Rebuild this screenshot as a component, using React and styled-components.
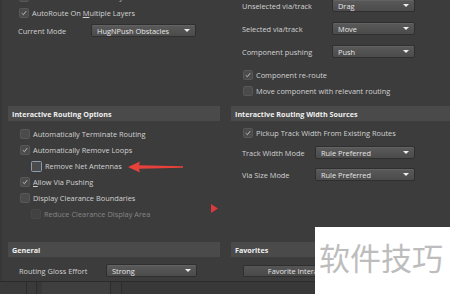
import React from "react";
import styled, { createGlobalStyle } from "styled-components";

const Global = createGlobalStyle`
  html, body { margin: 0; padding: 0; background: #3b3b3b; }
`;

export default function App() {
  return (
    <Page>
      <Global />
      <Body>
        <Cell $pad="0 0 0 18px" $top="1px">
          <Check label="AutoRoute On Current Layer" checked={false} />
          <Check label={<>AutoRoute On <u>M</u>ultiple Layers</>} checked />
          <Field $mt="3px" $labelW="73px" label="Current Mode" value="HugNPush Obstacles" selectW="105px" />
        </Cell>
        <Cell $pad="0 0 0 14px" $top="11px">
          <Field $labelW="90px" label="Unselected via/track" value="Drag" selectW="83px" />
          <Field $mt="10px" $labelW="90px" label="Selected via/track" value="Move" selectW="83px" />
          <Field $mt="10px" $labelW="90px" label="Component pushing" value="Push" selectW="83px" />
          <Spacer $h="9px" />
          <Check label="Component re-route" checked />
          <Check label="Move component with relevant routing" />
        </Cell>

        <Cell $pad="0 0 0 8px">
          <Header $w="212px">Interactive Routing Options</Header>
          <Rows $pad="5px 0 0 11px">
            <Check label="Automatically Terminate Routing" />
            <Check label="Automatically Remove Loops" checked />
            <Check label="Remove Net Antennas" indent focused />
            <Check label={<><u>A</u>llow Via Pushing</>} checked />
            <Check label="Display Clearance Boundaries" />
            <Check label="Reduce Clearance Display Area" indent disabled />
          </Rows>
        </Cell>
        <Cell $pad="0 0 0 3px">
          <Header>Interactive Routing Width Sources</Header>
          <Rows $pad="4px 0 0 11px">
            <Check label="Pickup Track Width From Existing Routes" checked />
            <Field $mt="5px" $labelW="73px" label="Track Width Mode" value="Rule Preferred" selectW="100px" />
            <Field $mt="9px" $labelW="73px" label="Via Size Mode" value="Rule Preferred" selectW="100px" />
          </Rows>
        </Cell>

        <Cell $pad="0 0 0 8px">
          <Header $w="212px">General</Header>
          <Rows $pad="7px 0 0 11px">
            <Field $labelW="87px" label="Routing Gloss Effort" value="Strong" selectW="91px" />
          </Rows>
        </Cell>
        <Cell $pad="0 0 0 3px">
          <Header>Favorites</Header>
          <Rows $pad="8px 0 0 12px">
            <Button>Favorite Interactive Routing Widths</Button>
          </Rows>
        </Cell>
      </Body>

      <Footer>
        <Tab $w="26px" />
        <Tab $w="9px" />
        <Gap $w="5px" />
        <Tab $w="68px" $light />
        <Tab $w="10px" />
      </Footer>

      <Arrow viewBox="0 0 58 12" width="58" height="12">
        <path d="M1 6 L13 0.5 L12 4.2 L56 5.3 L56 6.7 L12 7.8 L13 11.5 Z" fill="#e8413b" />
      </Arrow>
      <Pointer viewBox="0 0 7 9" width="7" height="9">
        <path d="M0 0 L7 4.5 L0 9 Z" fill="#d93a3c" />
      </Pointer>

      <Watermark>软件技巧</Watermark>
    </Page>
  );
}

function Check({ label, checked, indent, focused, disabled }) {
  return (
    <CheckRow $indent={indent} $disabled={disabled}>
      <Box $focused={focused} $disabled={disabled}>
        {checked && (
          <svg viewBox="0 0 10 10" width="10" height="10">
            <path d="M2.2 5.2 L4.2 7.2 L7.8 2.6" fill="none" stroke="#d6d6d6" strokeWidth="1" />
          </svg>
        )}
      </Box>
      <span>{label}</span>
    </CheckRow>
  );
}

function Field({ label, value, selectW, $labelW, $mt }) {
  return (
    <FieldRow $mt={$mt}>
      <Label $w={$labelW}>{label}</Label>
      <Select $w={selectW}>
        <span>{value}</span>
        <Caret />
      </Select>
    </FieldRow>
  );
}

const Page = styled.div`
  position: relative;
  width: 450px;
  height: 294px;
  overflow: hidden;
  background: #3c3c3c;
  box-shadow: inset 2px 0 0 #373737;
  font-family: "Open Sans", "Noto Sans", sans-serif;
  font-size: 7.4px;
  color: #d2d2d2;
`;

const Body = styled.div`
  display: grid;
  grid-template-columns: 228px 222px;
  grid-template-rows: 118px 136px 39px;
  margin-top: -12px;
`;

const Cell = styled.div`
  padding: ${(p) => p.$pad};
  padding-top: ${(p) => p.$top || "0"};
  display: flex;
  flex-direction: column;
  min-width: 0;
`;

const Rows = styled.div`
  display: flex;
  flex-direction: column;
  padding: ${(p) => p.$pad};
`;

const Spacer = styled.div`
  height: ${(p) => p.$h};
`;

const Header = styled.div`
  height: 15px;
  width: ${(p) => p.$w || "auto"};
  background: #4a4a4a;
  color: #f0f0f0;
  font-weight: 700;
  font-size: 7.2px;
  display: flex;
  align-items: center;
  padding-left: 4px;
  box-sizing: border-box;
  white-space: nowrap;
`;

const CheckRow = styled.label`
  height: 16px;
  display: flex;
  align-items: center;
  gap: 3px;
  padding-left: ${(p) => (p.$indent ? "12px" : "1px")};
  color: ${(p) => (p.$disabled ? "#858585" : "#d2d2d2")};
  white-space: nowrap;

  u {
    text-underline-offset: 1px;
  }
`;

const Box = styled.span`
  width: ${(p) => (p.$focused ? "11px" : "10px")};
  height: ${(p) => (p.$focused ? "11px" : "10px")};
  box-sizing: border-box;
  border-radius: 1.5px;
  background: ${(p) => (p.$disabled ? "#424242" : "#4b4b4b")};
  border: 1px solid ${(p) => (p.$focused ? "#8d9bb0" : p.$disabled ? "#474747" : "#575757")};
  display: flex;
  align-items: center;
  justify-content: center;
  flex-shrink: 0;

  svg {
    display: block;
  }
`;

const FieldRow = styled.div`
  display: flex;
  align-items: center;
  height: 13px;
  margin-top: ${(p) => p.$mt || "0"};
  white-space: nowrap;
`;

const Label = styled.span`
  width: ${(p) => p.$w};
  flex-shrink: 0;
`;

const Select = styled.div`
  width: ${(p) => p.$w};
  height: 13px;
  box-sizing: border-box;
  border: 1px solid #2f2f2f;
  border-radius: 2px;
  background: linear-gradient(#5a5a5a, #4b4b4b);
  color: #e6e6e6;
  display: flex;
  align-items: center;
  justify-content: space-between;
  padding: 0 5px 0 5px;
  box-shadow: inset 0 1px 0 rgba(255, 255, 255, 0.06);
`;

const Caret = styled.span`
  width: 0;
  height: 0;
  border-left: 3px solid transparent;
  border-right: 3px solid transparent;
  border-top: 3px solid #eeeeee;
`;

const Button = styled.div`
  width: 170px;
  height: 12px;
  box-sizing: border-box;
  border: 1px solid #2f2f2f;
  border-radius: 1px;
  background: linear-gradient(#555555, #494949);
  color: #e4e4e4;
  display: flex;
  align-items: center;
  justify-content: center;
  white-space: nowrap;
`;

const Footer = styled.div`
  height: 13px;
  border-top: 1px solid #2b2b2b;
  background: #383838;
  display: flex;
`;

const Tab = styled.div`
  width: ${(p) => p.$w};
  border-right: 1px solid #2c2c2c;
  background: ${(p) => (p.$light ? "#3f3f3f" : "#3a3a3a")};
`;

const Gap = styled.div`
  width: ${(p) => p.$w};
`;

const Arrow = styled.svg`
  position: absolute;
  left: 127px;
  top: 161px;
`;

const Pointer = styled.svg`
  position: absolute;
  left: 211px;
  top: 204px;
`;

const Watermark = styled.div`
  position: absolute;
  left: 315px;
  top: 227px;
  width: 135px;
  height: 67px;
  background: #ffffff;
  color: #bdbdbd;
  font-family: "Noto Sans CJK SC", sans-serif;
  font-size: 31px;
  line-height: 1;
  display: flex;
  align-items: center;
  padding: 0 0 9px 4px;
  box-sizing: border-box;
  white-space: nowrap;
`;
